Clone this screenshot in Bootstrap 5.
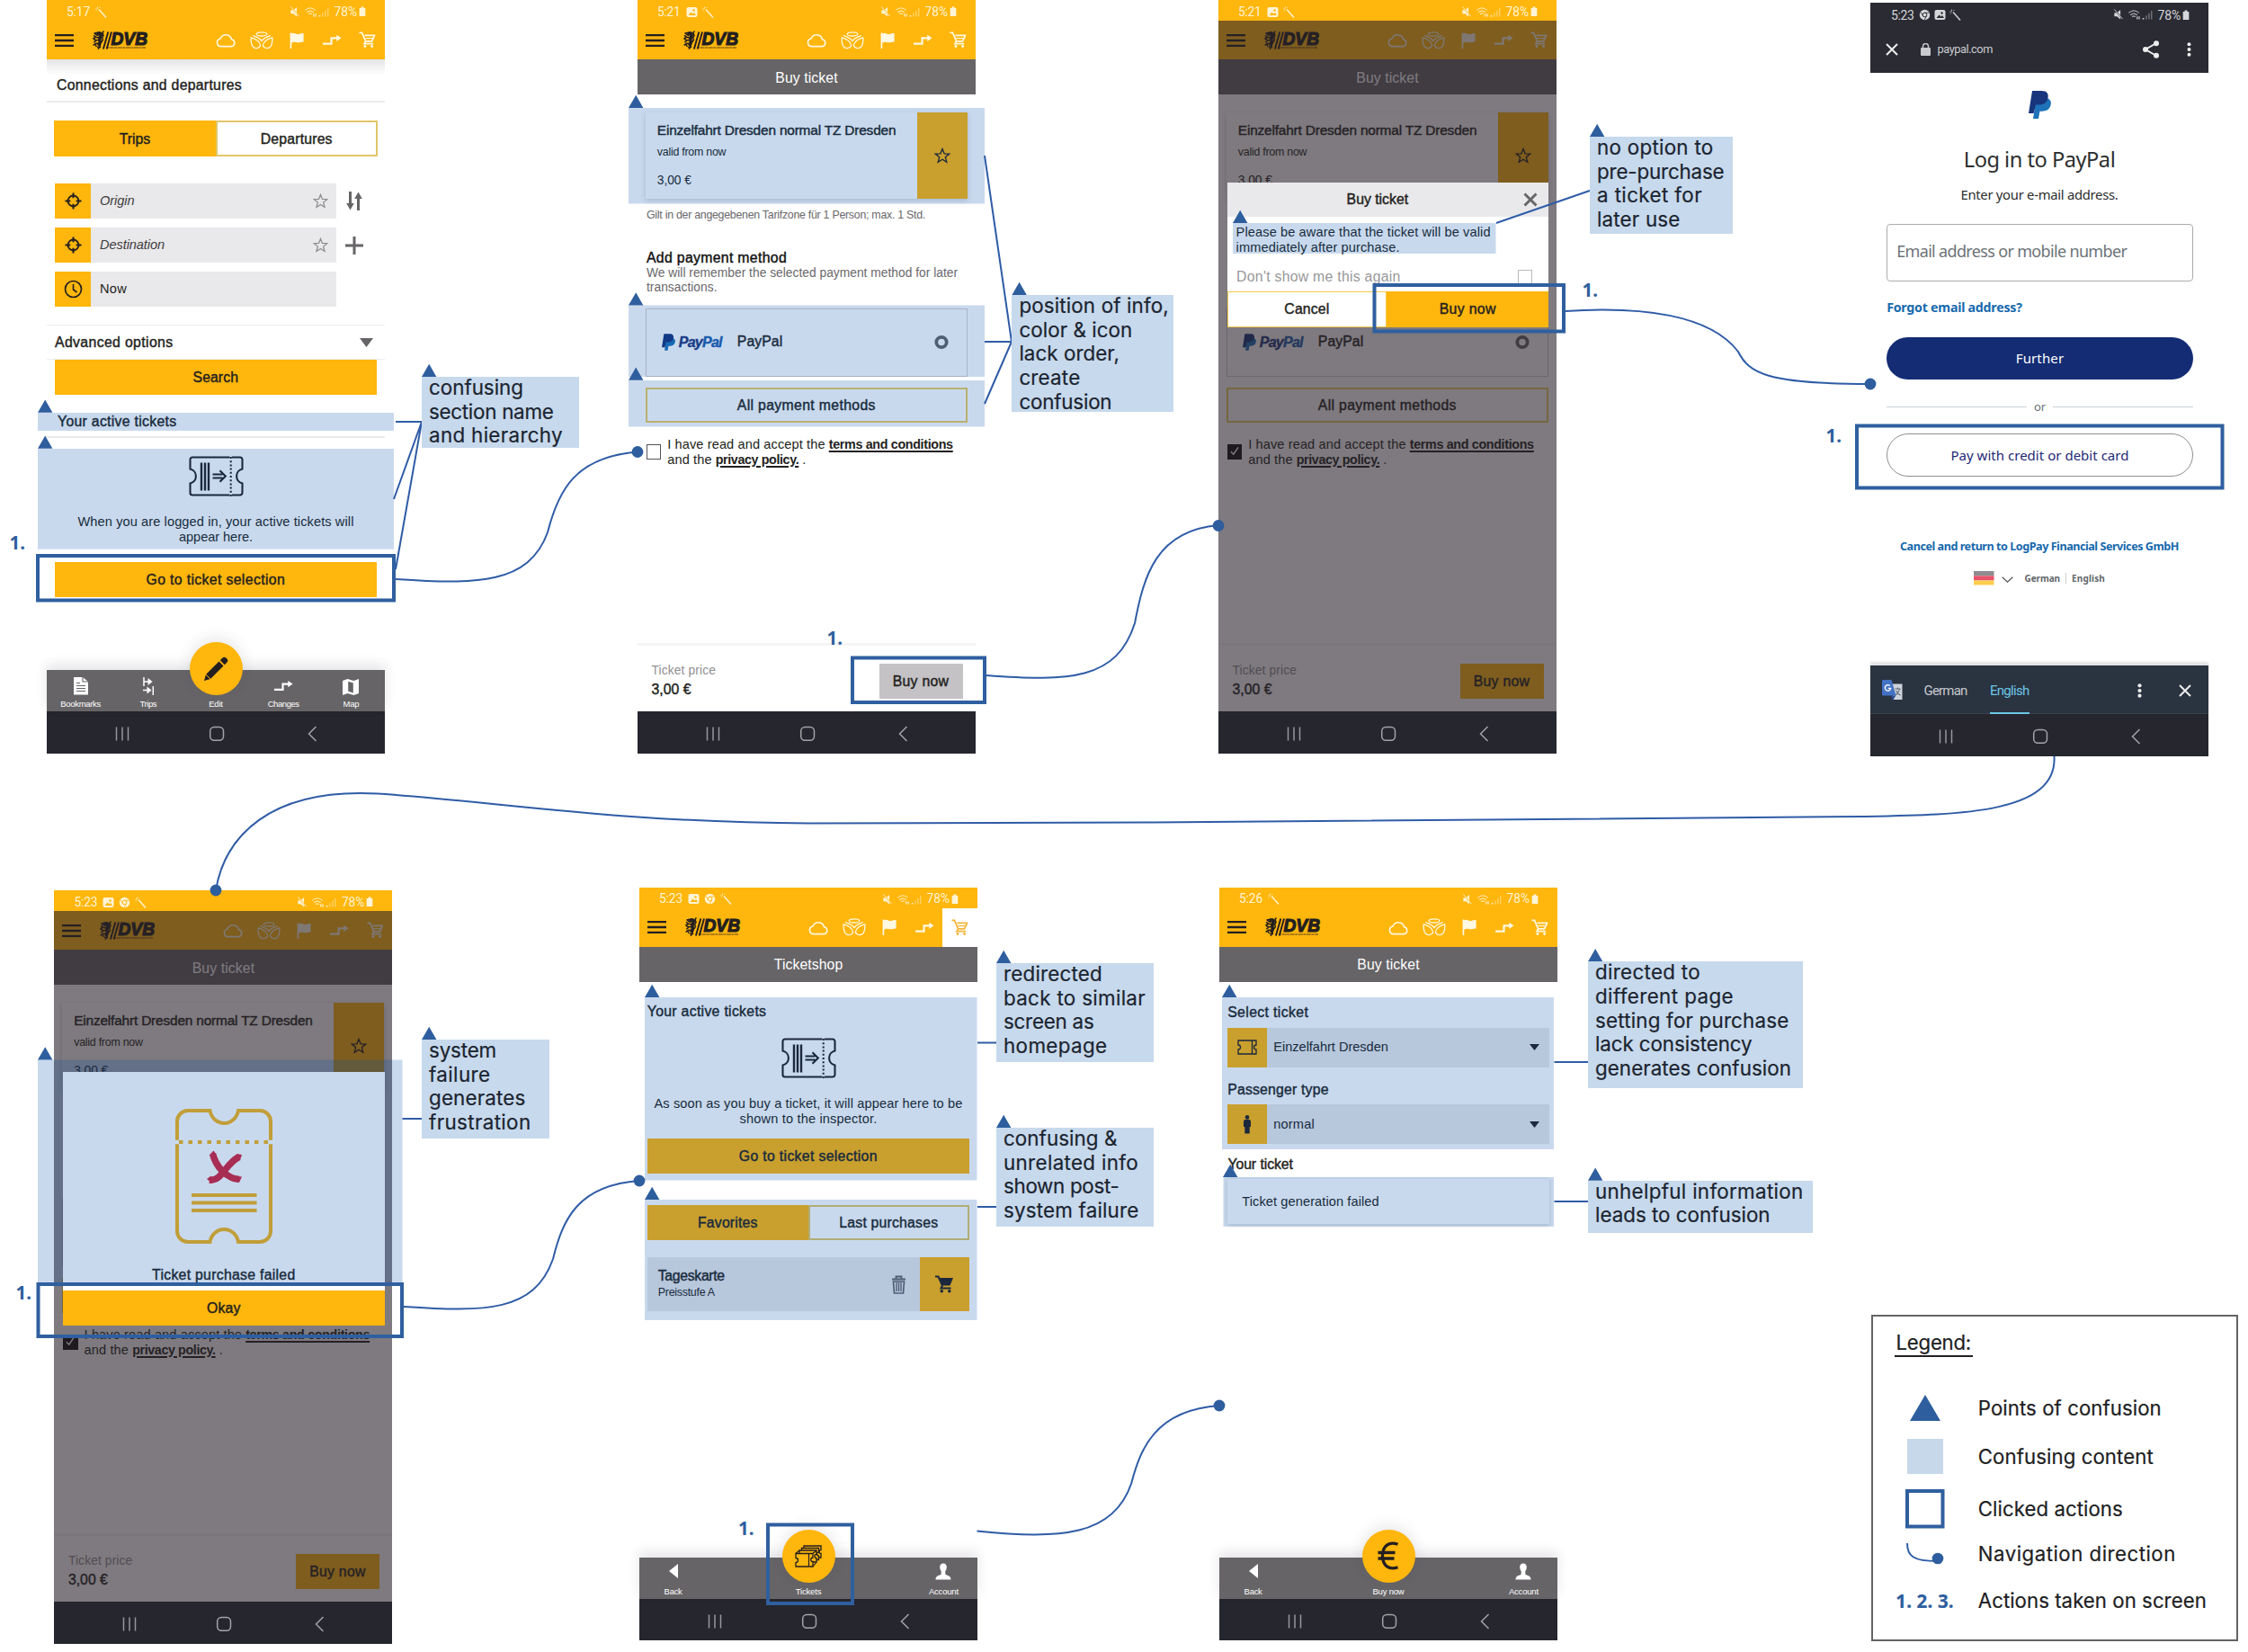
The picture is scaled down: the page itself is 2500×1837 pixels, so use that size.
<!DOCTYPE html>
<html lang="en">
<head>
<meta charset="utf-8">
<title>DVB ticket purchase – user flow</title>
<meta name="viewport" content="width=device-width, initial-scale=1">
<link rel="stylesheet" href="https://cdn.jsdelivr.net/npm/bootstrap@5.3.0/dist/css/bootstrap.min.css">
<style>
:root{--sun:#ffb60d;--ink:#231f20;--asphalt:#666467;--night:#26262e;--blue:#2e5e9e;--tint:#c7d9ec;--field:#e9e8ea}
body{background:#fff;color:var(--ink);font-family:"Liberation Sans",Arial,sans-serif;overflow:hidden}
.board{position:relative;width:2500px;height:1837px;overflow:hidden}
.phone{position:absolute;width:376px;height:837.7px;background:#fff;display:flex;flex-direction:column}
#p1{left:52px;top:0}#p2{left:709px;top:0}#p3{left:1355px;top:0}#p4{left:2080px;top:2.7px;height:838px}
#p5{left:60.4px;top:990px}#p6{left:711px;top:986.8px}#p7{left:1356px;top:986.8px}
.fit{display:inline-block;white-space:nowrap}
.md{-webkit-text-stroke:.42px currentColor}
.t15{font-size:15.8px;line-height:20px}.t14{font-size:14.6px;line-height:17.2px}
.t13{font-size:13.8px;line-height:16.2px}.t12{font-size:12.4px;line-height:16px}
.dimtext{color:#6a686b}
.sun{background:var(--sun)}
svg{display:block;flex:none}
/* status bar and app bar */
.statusbar{height:23px;background:var(--sun);color:#fff4d6;font:13.8px/23px Roboto,sans-serif;padding:3px 21px 0 22px;flex:none}
.statusbar .icons{gap:5px;margin-left:6px}
.appbar{height:43px;background:var(--sun);flex:none}
.appbar .cell{width:39.4px;height:43px;color:#fff8e2}
.appbar .cell:last-child{width:38.8px}
.burger{margin-left:9px}.brandmark{margin-left:21px}
.cart-on .appbar .cell:last-child{background:#fff;color:#f4b63a}
.pagebar{height:39px;background:var(--asphalt);color:#fff;flex:none;padding-top:2px}
.droid{height:46.5px;background:var(--night);flex:none}
/* shared pieces */
.btn-sun{height:39.3px;background:var(--sun);flex:none;padding-top:1px}
.wide{width:358px;margin-left:8.8px}
.seg{height:40px}
.seg .off{border:2px solid #e0c768}
.seg>div{padding-top:1px}
.tabs5{height:46px;background:var(--asphalt);color:#fff;font-size:9.5px;line-height:12px;position:relative;flex:none;box-shadow:0 -6px 12px rgba(60,50,70,.13)}
.tabs5 .slot{width:20%;padding-bottom:2px}
.fab{position:absolute;left:158.5px;top:-31px;width:59px;height:59px;border-radius:50%;background:var(--sun);box-shadow:0 -4px 16px rgba(60,50,70,.12)}
/* home */
.home-head{height:48px;padding:19.4px 0 0 11px;border-bottom:2px solid #ececed;background:linear-gradient(#e4e3e6,#fff 17px);flex:none}
.home-seg{margin-top:20px;width:359.6px;margin-left:8px}
.pick{height:39px;margin-left:9px;gap:0}
.pick .ic{width:40px;height:39px}
.pick .fld{width:273px;height:39px;background:var(--field);padding:0 9px 0 10px}
.pick em{color:#3f3d40}
.pick .side{width:40px}
.picks{margin-top:30px;gap:10px}
.adv{margin-top:20px;height:39px;border-top:1px solid #eee;border-bottom:1px solid #eee;padding:1px 13px 0 9px}
.home-tix{margin-top:20px;padding-left:12px;height:27.6px;border-bottom:2px solid #e9eaec}
.home-icon{margin-top:20px}.home-msg{margin-top:20px}
.home-go{margin-top:18.7px}
/* purchase form */
.tix{margin-top:19.5px;height:96px;box-shadow:0 2px 6px rgba(40,40,60,.2)}
.tix .txt{padding:10.5px 0 0 13px}.tix .t15{font-size:15.4px}.tix .valid{margin-top:6px}.tix .cost{margin-top:16px}
.tix .fav{width:56px}
.gilt{margin:10.2px 0 0 10px}.addpay{margin:30.7px 0 0 10px;color:#111}
.remember{margin:-1.2px 0 0 10px}
.pp{margin-top:14px;height:76px;border:1px solid #d2cfd0;padding:0 20px 0 17px}
.pp .word{font-size:16px;font-weight:700;font-style:italic;color:#1f5fae;-webkit-text-stroke:.4px currentColor}
.pp .word b{color:#233a7d}
.allpay{margin-top:12px;height:39px;border:2px solid #eccd62;padding-top:1px}
.terms{margin:16.2px 0 0 9.7px}
.tick{width:16.5px;height:16.5px;border:1.5px solid #555;margin-top:8.3px;margin-right:7px}
.checked .tick{background:#111;border-color:#111}
.tick svg{visibility:hidden}.checked .tick svg{visibility:visible}
.terms b{font-size:14.3px;text-decoration:underline;text-decoration-thickness:1.5px;text-underline-offset:2px}
.payfoot{height:76px;border-top:3px solid #f5f5f6;padding:19.6px 14.5px 0 15.5px;flex:none}
.payfoot .cta{width:93px;height:39px;background:#c4c2c5;margin-top:.4px}
.checked .payfoot .cta{background:var(--sun)}
.dim{position:absolute;left:0;right:0;top:23px;bottom:46.5px;background:rgba(40,34,42,.6)}
.dlg{position:absolute;left:9.6px;width:357.6px;background:#fff}
#d3{top:202.5px;height:161px}#d5{top:202px;height:282px}
.dlg-head{height:38.5px;background:#e9e9eb;padding:0 12px 0 133px}
.dlg-note{padding:8.5px 0 0 10px}
.dlg-again{padding:14.2px 18.500px 0 10.5px;color:#989799}
.dlg-again .bx{width:16px;height:16px;border:1.5px solid #bbb;margin-top:1.5px}
.dlg-act{height:40px}.dlg-act .no{width:177.5px;border:1.5px solid #f6c84c}
.fail-art{margin-top:41px}.fail-msg{margin-top:25.4px}.fail-ok{height:39.5px;padding-top:1px}
/* shop */
.shop-tix{margin:23.4px 0 0 8.8px}.shop-icon{margin-top:18.4px}.shop-msg{margin-top:20px}
.shop-go{margin-top:13.2px}.shop-seg{margin-top:34.3px;height:39px}
.favrow{margin-top:19.7px;height:60px;background:var(--field)}
.favrow .buy{width:55px}.favrow .info{padding:11px 0 0 12px}
/* select */
.sel-lab{margin:24.500px 0 0 9.2px}.sel-lab2{margin:15px 0 0 9.2px}.sel-lab3{margin:13px 0 0 9.4px}
.sel{height:44px;margin-top:6.6px;background:var(--field);padding-right:11px}
.sel .ic{width:44px;height:44px;margin-right:7.5px}
.gen{margin-top:6px;height:50px;box-shadow:0 1px 5px rgba(40,40,60,.22);padding-left:16.5px}
/* PayPal */
#p4{font-family:"Noto Sans","Open Sans",sans-serif}
.ppstat{background:#2a2b33;color:#d6d7da;font:14px/20px Roboto,sans-serif;height:28px;padding:0 21px 0 23px;flex:none}
.ppbar{background:#2a2b33;color:#c9cacd;height:50.3px;font:12.8px/20px Roboto,sans-serif;padding:0 19px 2px 16.5px;flex:none}
.pp-logo{margin-top:20px}
.pp-h{font-size:23.6px;line-height:30px;margin-top:30.3px;color:#2c2e2f}
.pp-sub{font-size:14.8px;line-height:20px;margin-top:13.4px;color:#2c2e2f}
.ppw{width:340.6px;margin-left:18.2px}
.pp-in{height:64px;flex:none;margin-top:23.6px;border:1.2px solid #a9abad;border-radius:4px;padding:0 0 4px 10px;font-size:18px;color:#6c7378}
.pp-forgot{margin-top:19px;font-size:14.2px;line-height:20px;font-weight:700;color:#1769ad}
.pp-btn{margin-top:22.6px;height:47.2px;border-radius:24px;background:#142c74;color:#fff;font-size:15px;flex:none}
.pp-or{height:20px;margin-top:20.8px;font-size:13px;color:#6c7378;gap:8px}
.pp-or i{flex:1;height:1px;background:#cbd2d6}
.pp-card{margin-top:19.2px;height:48px;border-radius:24px;border:1.2px solid #8d8f94;color:#1f2a75;font-size:15px;flex:none}
.pp-cancel{margin-top:68.4px;font-size:12.6px;line-height:20px;font-weight:700;color:#1769ad}
.pp-lang{margin-top:14.8px;height:20px;font-size:10px;line-height:20px;font-weight:700;color:#62676b}
.trbar{height:54.6px;flex:none;background:#2a3340;color:#c6cace;font:15px/20px Roboto,sans-serif;padding:3px 19px 0 13px;border-bottom:1px solid #3a4350;box-shadow:0 -4px 2px #e3e4e6}
.trbar .on{color:#6cc5e6;box-shadow:0 3px 0 #6cc5e6;height:48px;margin-left:25.500px}
/* annotation layer */
.wires{position:absolute;left:0;top:0}
.hl{fill:#004cab;fill-opacity:.21}
.box{fill:none;stroke:#2f5f9f;stroke-width:4}
.wire{fill:none;stroke:#2f5ca6;stroke-width:2}
.dot,.tri{fill:var(--blue)}
.num{font:700 20.5px "Noto Sans",sans-serif;fill:var(--blue)}
.memo{position:absolute;background:var(--tint);color:#1b2430;font:22.4px/26.65px Inter,"Noto Sans",sans-serif;padding-left:8px;-webkit-text-stroke:.2px currentColor}
.memo .in{margin-top:-1px}
.memo .fit,.legend .fit{display:block;width:max-content}
#m1{left:469px;top:419px;width:174.5px;height:79px}
#m2{left:1125.4px;top:328px;width:180px;height:130px}
#m3{left:1768px;top:152px;width:158.5px;height:108px}
#m5{left:469px;top:1156px;width:141.5px;height:110px}
#m6{left:1108px;top:1071px;width:175px;height:110px}
#m6b{left:1108px;top:1254px;width:175px;height:110px}
#m7{left:1766px;top:1069.3px;width:239px;height:141px}
#m7b{left:1766px;top:1312.7px;width:249.5px;height:58px}
.legend{position:absolute;left:2081px;top:1462px;width:407.5px;height:363px;border:2px solid #646466;background:#fff;font:22.2px/28px Inter,"Noto Sans",sans-serif;color:#202022;-webkit-text-stroke:.2px currentColor}
.legend .cap{margin:15px 0 0 23.500px;padding:0 2px;height:29.5px;border-bottom:2px solid #202022;width:max-content;line-height:27px}
.legend .key{width:77px;margin-left:19px;margin-right:20.8px}
.r1{height:51px;margin-top:31.5px}.r2{height:57.5px}.r3{height:58px}.r4{height:42px}.r5{height:63px}
</style>
</head>
<body>

<!-- symbols -->
<svg width="0" height="0" class="position-absolute" aria-hidden="true">
<defs>
<symbol id="i-burger" viewBox="0 0 21 16"><path d="M0 2.200h21M0 8h21M0 13.800h21" stroke="#231f20" stroke-width="2.300"/></symbol>
<symbol id="i-dvb" viewBox="0 0 62 22">
<g fill="none" stroke="#231f20" stroke-linecap="round" stroke-linejoin="round"><path d="M6 3.200c2-1 3.800 0 3 2.300S7.500 9 8 11s.8 3-.8 4.500" stroke-width="3.600"/><path d="M5.500 2.200L2 3l1.800 1.500L6 5.500M7 8L3.500 7.200 1.500 5.700M2.800 7.800L.9 8.700M7.500 10.500L4 10.800 1.500 9.800M3.500 11.500l-1.700 1.300M7.500 14.500L4 14.200 1.200 16M3 15.500l1 1.800M8 15l.3 3-2 2.200M8.500 18.500l-3-.2M10.300 12.500l1.200-2.500-1-2 1.500-2.500-1-3 1-1.500" stroke-width="1.500"/></g>
<path d="M17.300 1.500L11.900 20.500M21 1.500L15.700 20.500" stroke="#231f20" stroke-width="1.900"/>
<text x="20.500" y="16" textLength="40.500" lengthAdjust="spacingAndGlyphs" font-family="Liberation Sans" font-weight="700" font-style="italic" font-size="20" fill="#231f20" stroke="#231f20" stroke-width="1.200">DVB</text>
<path d="M15 19h44" stroke="#231f20" stroke-opacity=".75" stroke-width="1" stroke-dasharray="3 .6 5 .5"/></symbol>
<symbol id="i-cloud" viewBox="0 0 24 18"><path d="M6 16.200a4.600 4.600 0 0 1-.8-9.100A6.900 6.900 0 0 1 18.300 8a4.200 4.200 0 0 1 .2 8.200z" fill="none" stroke="currentColor" stroke-width="1.700"/></symbol>
<symbol id="i-leaf" viewBox="0 0 26 20"><g fill="none" stroke="currentColor" stroke-width="1.300"><ellipse cx="13" cy="2.900" rx="5.800" ry="2.100"/><path d="M1.200 6.800C6.500 8 11 11.500 11.700 15.500c-1.700 3.800-6.700 4-8.700 1.200S1 10.500 1.200 6.800zM24.800 6.800C19.500 8 15 11.500 14.300 15.500c1.700 3.800 6.700 4 8.700 1.200s2-6.200 1.800-9.900zM3 4.500c2.500 1 7.500 2.500 10 6 2.500-3.500 7.500-5 10-6"/></g></symbol>
<symbol id="i-flag" viewBox="0 0 18 21"><path d="M1.500 1.500V20" stroke="currentColor" stroke-width="1.800"/><path d="M2 2.500c4-2.500 6 1.500 9 .5 2-.7 3-1 5.500-1v10c-3-.3-5 1.500-7.500.8-2.500-.7-4-1-7 .7z" fill="currentColor"/></symbol>
<symbol id="i-change" viewBox="0 0 24 14"><path d="M1 11h10V4.500h8" fill="none" stroke="currentColor" stroke-width="2.300"/><path d="M17 .8l5.500 3.700L17 8.200z" fill="currentColor"/></symbol>
<symbol id="i-cart" viewBox="0 0 20 20"><path d="M.5 1.500h3.300l4.400 10.300h7.500L19 4.600H7M8.200 11.800l-1.700 3h11" fill="none" stroke="currentColor" stroke-width="1.900"/><path d="M8 8.200h9" stroke="currentColor" stroke-width="1.200"/><circle cx="7.500" cy="17.800" r="1.600" fill="currentColor"/><circle cx="15.800" cy="17.800" r="1.600" fill="currentColor"/></symbol>
<symbol id="i-cartfull" viewBox="0 0 20 20"><path d="M0 1.500h3.500L8 11.500l-1.500 3h11" fill="none" stroke="currentColor" stroke-width="2"/><path d="M4.500 3H20l-3.500 8.500h-8z" fill="currentColor"/><circle cx="7.300" cy="17.800" r="1.800" fill="currentColor"/><circle cx="15.800" cy="17.800" r="1.800" fill="currentColor"/></symbol>
<symbol id="i-star" viewBox="0 0 18 18"><path d="M9 1.500l2.100 5.300 5.600.3-4.400 3.600 1.500 5.600L9 13.200l-4.800 3.100 1.500-5.600L1.300 7.100l5.600-.3z" fill="none" stroke="currentColor" stroke-width="1.300"/></symbol>
<symbol id="i-aim" viewBox="0 0 20 20"><circle cx="10" cy="10" r="6.300" fill="none" stroke="#231f20" stroke-width="1.900"/><path d="M10 .5v6.200M10 13.300v6.200M.5 10h6.200M13.300 10h6.200" stroke="#231f20" stroke-width="2.100"/></symbol>
<symbol id="i-pic" viewBox="0 0 13 13"><rect x=".5" y="1" width="12" height="11" rx="2" fill="currentColor"/><path d="M2.500 10l3-3.500 2 2 1.500-1.500 2 3z" fill="var(--bg,#ffb60d)"/><circle cx="8.500" cy="4.500" r="1.200" fill="var(--bg,#ffb60d)"/></symbol>
<symbol id="i-chrome" viewBox="0 0 13 13"><circle cx="6.500" cy="6.500" r="5.700" fill="currentColor"/><circle cx="6.500" cy="6.500" r="2.300" fill="none" stroke="var(--bg,#ffb60d)" stroke-width="1"/><path d="M6.500 4.200h5M4.500 7.700L2 3.500M8.500 7.700L6.300 12" stroke="var(--bg,#ffb60d)" stroke-width=".8"/></symbol>
<symbol id="i-wand" viewBox="0 0 13 13"><path d="M4 3.500l8 9" stroke="currentColor" stroke-width="1.400"/><path d="M2.500.5v2M.3 3h2M1 5.500l1-1M5.500 1l-1 1" stroke="currentColor" stroke-width=".8"/></symbol>
<symbol id="i-sys" viewBox="0 0 47 13"><path d="M1 4.500h3L8 1v11L4 8.500H1z" fill="currentColor"/><path d="M1.500 1l9.500 11" stroke="var(--bg,#ffb60d)" stroke-width="1.600"/><path d="M1 .5l9.500 11" stroke="currentColor" stroke-width="1"/><g fill="none" stroke="currentColor" opacity=".75" stroke-width="1.200"><path d="M17.500 4.500q6-5 12 0M19.500 7q4-3.500 8 0M21.500 9.300q2-2 4 0"/></g><path d="M27.500 12V8.500M29.800 8.500V12" stroke="currentColor" stroke-width="1.200"/><path d="M34.500 12v-1.500" stroke="currentColor" stroke-width="1.800"/><path d="M38 12V7.500M41 12V5M44 12V2" stroke="currentColor" opacity=".4" stroke-width="1.600"/></symbol>
<symbol id="i-batt" viewBox="0 0 8 12"><path d="M2.500.5h3v1.500H7.500v9.500h-7V2h2z" fill="currentColor"/></symbol>
<symbol id="i-ticket" viewBox="0 0 61 45"><path d="M4 1.500h53a2.500 2.500 0 0 1 2.500 2.500v10.500a8.200 8.200 0 0 0 0 16V41a2.500 2.500 0 0 1-2.500 2.500H4A2.500 2.500 0 0 1 1.500 41V30.500a8.200 8.200 0 0 0 0-16V4A2.500 2.500 0 0 1 4 1.500z" fill="none" stroke="currentColor" stroke-width="2.100"/><path d="M14 7.500v31M18 7.500v31M22 7.500v31" stroke="currentColor" stroke-width="2.400"/><path d="M26.500 20.500h11M26.500 24.500h11M34.500 16.300l6.300 6.200-6.300 6.200" fill="none" stroke="currentColor" stroke-width="2.100"/><path d="M46.700 0v45" stroke="#fff" stroke-width="2.400"/><path d="M46.700 1v44" stroke="currentColor" stroke-width="2.100" stroke-dasharray="2 2.200"/></symbol>
<symbol id="i-pp" viewBox="0 0 25 31"><path d="M8.500 8h12c4 1.500 5 4.500 4 8-1.200 4.800-4.800 6.700-9.500 6.700h-2.600L11 31H5z" fill="#1e72b8"/><path d="M4 0h10.500c6 0 8 3.500 7 8-1.200 5.500-4.800 7.500-10 7.500H8L5.600 25H0z" fill="#16357c"/></symbol>
<symbol id="i-droid" viewBox="0 0 376 46.500"><path d="M77.500 17.500v15M84 17.500v15M90.500 17.500v15" stroke="#97979c" stroke-width="1.500"/><rect x="181.700" y="17.500" width="14.800" height="14.800" rx="4.500" fill="none" stroke="#a3a3a8" stroke-width="1.500"/><path d="M299.500 17l-8 8 8 8" fill="none" stroke="#a3a3a8" stroke-width="1.500"/></symbol>
<symbol id="i-person" viewBox="0 0 18 19"><path d="M9 .5c2.500 0 4 1.800 3.800 4.500-.2 2-.8 3-1.600 4.500l.3 3.500c2.500 1 6 1.200 6 5.500H.5c0-4.300 3.500-4.500 6-5.500l.3-3.500C6 8 5.400 7 5.200 5 5 2.300 6.500.5 9 .5z" fill="#fff"/></symbol>
</defs>
</svg>

<!-- repeated parts -->
<template id="t-sys"><div class="d-flex align-items-center ms-auto"><svg width="46" height="12.500"><use href="#i-sys"/></svg><span class="fit ms-1" data-w="25.500">78%</span><svg width="8" height="11.500" style="margin-left:2px"><use href="#i-batt"/></svg></div></template>
<template id="t-bar"><div class="appbar d-flex align-items-center">
<svg class="burger" width="21" height="16"><use href="#i-burger"/></svg><svg class="brandmark" width="62" height="22"><use href="#i-dvb"/></svg>
<div class="d-flex ms-auto">
<div class="cell d-flex align-items-center justify-content-center"><svg width="23" height="17.500"><use href="#i-cloud"/></svg></div>
<div class="cell d-flex align-items-center justify-content-center"><svg width="26" height="20"><use href="#i-leaf"/></svg></div>
<div class="cell d-flex align-items-center justify-content-center"><svg width="17" height="20"><use href="#i-flag"/></svg></div>
<div class="cell d-flex align-items-center justify-content-center"><svg width="23" height="13.500"><use href="#i-change"/></svg></div>
<div class="cell d-flex align-items-center justify-content-center"><svg width="18.500" height="18.500"><use href="#i-cart"/></svg></div>
</div></div></template>
<template id="t-droid"><div class="droid"><svg width="376" height="46.500"><use href="#i-droid"/></svg></div></template>
<template id="t-buy">
<div class="pagebar d-flex align-items-center justify-content-center"><span class="fit t15" data-w="69.500">Buy ticket</span></div>
<div class="tix wide d-flex justify-content-between"><div class="txt">
<div class="t15"><span class="fit md" data-w="265.500">Einzelfahrt Dresden normal TZ Dresden</span></div>
<div class="t12 valid"><span class="fit" data-w="76.500">valid from now</span></div>
<div class="t13 cost"><span class="fit" data-w="38">3,00 €</span></div></div>
<div class="fav sun d-flex align-items-center justify-content-center"><svg width="18" height="18"><use href="#i-star"/></svg></div></div>
<div class="gilt t12 dimtext"><span class="fit" data-w="310">Gilt in der angegebenen Tarifzone für 1 Person; max. 1 Std.</span></div>
<div class="addpay t15"><span class="fit md" data-w="156">Add payment method</span></div>
<div class="remember t13 dimtext"><span class="fit" data-w="346">We will remember the selected payment method for later</span><br><span class="fit" data-w="78.500">transactions.</span></div>
<div class="pp wide d-flex align-items-center"><svg width="15" height="19"><use href="#i-pp"/></svg><span class="fit word" data-w="48" style="margin-left:4px"><b>Pay</b>Pal</span><span class="fit t15 md" data-w="50.500" style="margin:-2px 0 0 17px">PayPal</span>
<svg class="ms-auto" width="16" height="17"><circle cx="8" cy="8.500" r="5.700" fill="none" stroke="#666467" stroke-width="3.800"/></svg></div>
<div class="allpay wide d-flex align-items-center justify-content-center"><span class="fit t15 md" data-w="154">All payment methods</span></div>
<div class="terms d-flex"><div class="tick"><svg width="13.500" height="13.500" viewBox="0 0 14 14"><path d="M3 7.500l3 3 5.500-8" fill="none" stroke="#fff" stroke-width="1.500"/></svg></div>
<div class="t14"><span class="fit" data-w="175.500">I have read and accept the</span> <b class="fit" data-w="138">terms and conditions</b><br><span class="fit" data-w="49.500">and the</span> <b class="fit" data-w="92.500">privacy policy.</b> .</div></div>
<div class="payfoot d-flex justify-content-between mt-auto"><div><div class="t13" style="color:#918f92"><span class="fit" data-w="71.500">Ticket price</span></div><div class="t15" style="margin-top:3px"><span class="fit md" data-w="44">3,00 €</span></div></div>
<div class="cta d-flex align-items-center justify-content-center"><span class="fit t15 md" data-w="62.500">Buy now</span></div></div>
</template>

<main class="board">

<!-- 1 home -->
<section class="phone" id="p1">
<div class="statusbar d-flex align-items-center"><span class="fit" data-w="26">5:17</span><div class="d-flex icons"><svg width="13" height="13"><use href="#i-wand"/></svg></div><i data-part="t-sys"></i></div>
<i data-part="t-bar"></i>
<div class="home-head t15"><span class="fit md" data-w="206">Connections and departures</span></div>
<div class="seg home-seg d-flex t15 text-center"><div class="sun w-50 d-flex align-items-center justify-content-center"><span class="fit md" data-w="34.500">Trips</span></div><div class="off w-50 d-flex align-items-center justify-content-center"><span class="fit md" data-w="80">Departures</span></div></div>
<div class="picks d-flex flex-column">
<div class="pick d-flex align-items-center"><div class="ic sun d-flex align-items-center justify-content-center"><svg width="19" height="19"><use href="#i-aim"/></svg></div><div class="fld d-flex align-items-center justify-content-between t15"><em class="fit t14" data-w="38.500">Origin</em><svg width="17" height="17" style="color:#8c8a8e"><use href="#i-star"/></svg></div>
<div class="side d-flex justify-content-center"><svg width="20" height="21" viewBox="0 0 20 21"><path d="M5.500 0v14M14.500 21V7" stroke="#666467" stroke-width="3"/><path d="M1.200 13h8.600L5.500 20.500zM10.200 8h8.600L14.500.5z" fill="#666467"/></svg></div></div>
<div class="pick d-flex align-items-center"><div class="ic sun d-flex align-items-center justify-content-center"><svg width="19" height="19"><use href="#i-aim"/></svg></div><div class="fld d-flex align-items-center justify-content-between t15"><em class="fit t14" data-w="72">Destination</em><svg width="17" height="17" style="color:#8c8a8e"><use href="#i-star"/></svg></div>
<div class="side d-flex justify-content-center"><svg width="20" height="20"><path d="M10 0v20M0 10h20" stroke="#666467" stroke-width="3"/></svg></div></div>
<div class="pick d-flex align-items-center"><div class="ic sun d-flex align-items-center justify-content-center"><svg width="21" height="21" viewBox="0 0 21 21"><circle cx="10.500" cy="10.500" r="9" fill="none" stroke="#231f20" stroke-width="1.700"/><path d="M10.500 5v6l4 3" fill="none" stroke="#231f20" stroke-width="1.600"/></svg></div><div class="fld d-flex align-items-center"><span class="fit t14" data-w="30">Now</span></div></div>
</div>
<div class="adv d-flex align-items-center justify-content-between t15"><span class="fit md" data-w="131.500">Advanced options</span><svg width="15" height="10"><path d="M0 0h15L7.500 10z" fill="#666467"/></svg></div>
<div class="btn-sun wide d-flex align-items-center justify-content-center t15"><span class="fit md" data-w="50.500">Search</span></div>
<div class="home-tix t15"><span class="fit md" data-w="132.500">Your active tickets</span></div>
<div class="home-icon d-flex justify-content-center"><svg width="61" height="45"><use href="#i-ticket"/></svg></div>
<div class="home-msg t14 text-center"><span class="fit" data-w="307">When you are logged in, your active tickets will</span><br><span class="fit" data-w="82">appear here.</span></div>
<div class="btn-sun wide home-go d-flex align-items-center justify-content-center t15"><span class="fit md" data-w="154.500">Go to ticket selection</span></div>
<div class="tabs5 mt-auto d-flex text-center">
<div class="slot d-flex flex-column align-items-center justify-content-end"><svg width="16" height="20" viewBox="0 0 16 20"><path d="M0 0h10l6 5v14.500H0z" fill="#fff"/><path d="M10 0v5h6M3 6.500h4M3 9.500h10M3 12.500h10M3 15.500h10" stroke="#666467" stroke-width="1.100" fill="none"/></svg><span class="fit mt-1" data-w="44.500">Bookmarks</span></div>
<div class="slot d-flex flex-column align-items-center justify-content-end"><svg width="12" height="20" viewBox="0 0 12 20"><path d="M1 0v10M11.300 10v10M1 5h7M0 14.500h7" stroke="#fff" stroke-width="1.500"/><path d="M5.500 1l5 4-5 4zM4.500 10.500l5 4-5 4z" fill="#fff"/></svg><span class="fit mt-1" data-w="18.500">Trips</span></div>
<div class="slot d-flex flex-column align-items-center justify-content-end"><span class="fit" data-w="15.500">Edit</span></div>
<div class="slot d-flex flex-column align-items-center justify-content-end"><svg width="23" height="14"><use href="#i-change"/></svg><span class="fit" style="margin-top:7px" data-w="35">Changes</span></div>
<div class="slot d-flex flex-column align-items-center justify-content-end"><svg width="18" height="18" viewBox="0 0 18 18"><path d="M0 2l5.500-2 7 2L18 0v16l-5.500 2-7-2L0 18z" fill="#fff"/><path d="M6.200 2.800l5.600 1.600v11L6.200 13.800z" fill="#666467"/></svg><span class="fit mt-1" data-w="17.500">Map</span></div>
<div class="fab d-flex align-items-center justify-content-center"><svg width="29" height="29" viewBox="0 0 29 29"><path d="M1 28l2-7L17.500 6.500l5 5L8 26z" fill="#231f20"/><path d="M18.800 5.200l2.700-2.700c1.200-1.200 2.800-1 4 .2l.8.8c1.200 1.200 1.400 2.800.2 4L23.800 10.200z" fill="#231f20"/><path d="M3 21L8 26" stroke="#ffb60d" stroke-width="1"/></svg></div>
</div>
<i data-part="t-droid"></i>
</section>

<!-- 2 buy ticket -->
<section class="phone" id="p2">
<div class="statusbar d-flex align-items-center"><span class="fit" data-w="25.500">5:21</span><div class="d-flex icons"><svg width="13" height="13"><use href="#i-pic"/></svg><svg width="13" height="13"><use href="#i-wand"/></svg></div><i data-part="t-sys"></i></div>
<i data-part="t-bar"></i><i data-part="t-buy"></i><i data-part="t-droid"></i>
</section>

<!-- 3 confirmation dialog -->
<section class="phone checked" id="p3">
<div class="statusbar d-flex align-items-center"><span class="fit" data-w="25.500">5:21</span><div class="d-flex icons"><svg width="13" height="13"><use href="#i-pic"/></svg><svg width="13" height="13"><use href="#i-wand"/></svg></div><i data-part="t-sys"></i></div>
<i data-part="t-bar"></i><i data-part="t-buy"></i><i data-part="t-droid"></i>
<div class="dim"></div>
<div class="dlg d-flex flex-column" id="d3">
<div class="dlg-head d-flex align-items-center justify-content-between t15"><span class="fit md" data-w="68.500">Buy ticket</span><svg width="16" height="16"><path d="M1.500 1.500l13 13M14.500 1.500l-13 13" stroke="#666467" stroke-width="2.900"/></svg></div>
<div class="dlg-note t14"><span class="fit" data-w="283">Please be aware that the ticket will be valid</span><br><span class="fit" data-w="182">immediately after purchase.</span></div>
<div class="dlg-again d-flex justify-content-between t15"><span class="fit" data-w="182.500">Don't show me this again</span><div class="bx"></div></div>
<div class="dlg-act d-flex mt-auto t15"><div class="no d-flex align-items-center justify-content-center"><span class="fit md" data-w="50">Cancel</span></div><div class="sun flex-fill d-flex align-items-center justify-content-center"><span class="fit md" data-w="63">Buy now</span></div></div>
</div>
</section>

<!-- 4 PayPal login -->
<section class="phone" id="p4" style="--bg:#2a2b33">
<div class="ppstat d-flex align-items-center"><span class="fit" data-w="25.500">5:23</span><div class="d-flex" style="gap:4px;margin-left:5px"><svg width="13" height="13"><use href="#i-chrome"/></svg><svg width="13" height="13"><use href="#i-pic"/></svg><svg width="13" height="13"><use href="#i-wand"/></svg></div><i data-part="t-sys"></i></div>
<div class="ppbar d-flex align-items-center"><svg width="14" height="14"><path d="M1 1l12 12M13 1L1 13" stroke="#eee" stroke-width="2"/></svg>
<svg width="11" height="14" viewBox="0 0 11 14" style="margin-left:25px"><rect y="5" width="11" height="9" rx="1" fill="#c9cacd"/><path d="M2.500 6V3.500a3 3 0 0 1 6 0V6" fill="none" stroke="#c9cacd" stroke-width="1.500"/></svg><span class="fit" data-w="61.500" style="margin-left:8px">paypal.com</span>
<svg class="ms-auto" width="18" height="20" viewBox="0 0 18 20"><path d="M15 3L3 10l12 7" fill="none" stroke="#eee" stroke-width="2"/><circle cx="15" cy="3.200" r="3" fill="#eee"/><circle cx="3" cy="10" r="3" fill="#eee"/><circle cx="15" cy="16.800" r="3" fill="#eee"/></svg>
<svg width="5" height="16" style="margin-left:31px"><circle cx="2.500" cy="2.300" r="2" fill="#eee"/><circle cx="2.500" cy="8" r="2" fill="#eee"/><circle cx="2.500" cy="13.700" r="2" fill="#eee"/></svg></div>
<div class="pp-logo d-flex justify-content-center"><svg width="25" height="31"><use href="#i-pp"/></svg></div>
<div class="pp-h text-center"><span class="fit" data-w="168.500">Log in to PayPal</span></div>
<div class="pp-sub text-center"><span class="fit" data-w="175">Enter your e-mail address.</span></div>
<div class="pp-in ppw d-flex align-items-center"><span class="fit" data-w="256">Email address or mobile number</span></div>
<div class="pp-forgot ppw"><span class="fit" data-w="150.500">Forgot email address?</span></div>
<div class="pp-btn ppw d-flex align-items-center justify-content-center"><span class="fit" data-w="53.500">Further</span></div>
<div class="pp-or ppw d-flex align-items-center"><i></i><span>or</span><i></i></div>
<div class="pp-card ppw d-flex align-items-center justify-content-center"><span class="fit" data-w="198">Pay with credit or debit card</span></div>
<div class="pp-cancel text-center"><span class="fit" data-w="310">Cancel and return to LogPay Financial Services GmbH</span></div>
<div class="pp-lang d-flex align-items-center" style="padding-left:115px"><svg width="22.500" height="15.500"><path fill="#8e8c8f" d="M0 0h22.500v5.300H0z"/><path fill="#e8536a" d="M0 5.300h22.500v5.200H0z"/><path fill="#fbcf4d" d="M0 10.500h22.500v5H0z"/></svg><svg width="13" height="7" style="margin:2px 12.500px 0 8.500px"><path d="M.7.7l5.800 5.500L12.300.7" fill="none" stroke="#555" stroke-width="1.200"/></svg><span class="fit" data-w="39.500">German</span><span style="width:1px;height:12px;background:#ccc;margin:0 6px"></span><span class="fit" data-w="37">English</span></div>
<div class="trbar mt-auto d-flex align-items-center"><svg width="23" height="23" viewBox="0 0 23 23"><path d="M10 4.500h12.500V22H13z" fill="#cdd3da"/><path d="M14.500 10h6M17.500 8.500V10M19.500 10q-1 5-5 7M15.500 12q2 4 5 5" stroke="#5b6672" stroke-width="1.100" fill="none"/><path d="M1 0h9.500l5 17.500H1.500A1.200 1.200 0 0 1 0 16V1z" fill="#4372c4"/><path d="M10 17.500h5.500L12 22.500z" fill="#2b4f96"/><path d="M8.800 6.600a3.200 3.200 0 1 0 .9 2.800H6.700" fill="none" stroke="#fff" stroke-width="1.400"/></svg>
<span class="fit" data-w="48" style="margin-left:23.500px">German</span><div class="on d-flex align-items-center"><span class="fit" data-w="43.500">English</span></div>
<svg class="ms-auto" width="5" height="16"><circle cx="2.500" cy="2.300" r="2.100" fill="#eee"/><circle cx="2.500" cy="8" r="2.100" fill="#eee"/><circle cx="2.500" cy="13.700" r="2.100" fill="#eee"/></svg><svg width="14" height="14" style="margin-left:41.500px"><path d="M1 1l12 12M13 1L1 13" stroke="#eee" stroke-width="2"/></svg></div>
<i data-part="t-droid"></i>
</section>

<!-- 5 failure dialog -->
<section class="phone checked" id="p5">
<div class="statusbar d-flex align-items-center"><span class="fit" data-w="26">5:23</span><div class="d-flex icons"><svg width="13" height="13"><use href="#i-pic"/></svg><svg width="13" height="13"><use href="#i-chrome"/></svg><svg width="13" height="13"><use href="#i-wand"/></svg></div><i data-part="t-sys"></i></div>
<i data-part="t-bar"></i><i data-part="t-buy"></i><i data-part="t-droid"></i>
<div class="dim"></div>
<div class="dlg d-flex flex-column align-items-center" id="d5">
<svg class="fail-art" width="108" height="150" viewBox="0 0 108 150"><path d="M14 2H38.500a16 17 0 0 0 31.500 0H94a12 12 0 0 1 12 12V136a12 12 0 0 1-12 12H70a16 17 0 0 0-31.500 0H14A12 12 0 0 1 2 136V14A12 12 0 0 1 14 2z" fill="none" stroke="#f5b51b" stroke-width="4"/><path d="M0 37h108" stroke="#fff" stroke-width="4.500"/><path d="M4 37h100" stroke="#f5b51b" stroke-width="4" stroke-dasharray="4.500 6"/><path d="M41.500 50C45 63 55 77 71 78.500M71 53.500C56 60 52 81 38 79" fill="none" stroke="#d5263d" stroke-width="7.500"/><path d="M38 51l4.500-4.500L45 50zM68 50l6 1-2 6zM35 78l4-3 1 7zM68 75l6 .5-3 6.500z" fill="#d5263d"/><path d="M18 96h72.500M18 104.500h72.500M18 113h72.500" stroke="#f5b51b" stroke-width="4"/></svg>
<div class="fail-msg t15"><span class="fit md" data-w="159.500">Ticket purchase failed</span></div>
<div class="fail-ok sun w-100 mt-auto d-flex align-items-center justify-content-center t15"><span class="fit md" data-w="37.500">Okay</span></div>
</div>
</section>

<!-- 6 ticket shop -->
<section class="phone cart-on" id="p6">
<div class="statusbar d-flex align-items-center"><span class="fit" data-w="26">5:23</span><div class="d-flex icons"><svg width="13" height="13"><use href="#i-pic"/></svg><svg width="13" height="13"><use href="#i-chrome"/></svg><svg width="13" height="13"><use href="#i-wand"/></svg></div><i data-part="t-sys"></i></div>
<i data-part="t-bar"></i>
<div class="pagebar d-flex align-items-center justify-content-center"><span class="fit t15" data-w="76.500">Ticketshop</span></div>
<div class="shop-tix t15"><span class="fit md" data-w="132.500">Your active tickets</span></div>
<div class="shop-icon d-flex justify-content-center"><svg width="61" height="45"><use href="#i-ticket"/></svg></div>
<div class="shop-msg t14 text-center"><span class="fit" data-w="343">As soon as you buy a ticket, it will appear here to be</span><br><span class="fit" data-w="153">shown to the inspector.</span></div>
<div class="btn-sun wide shop-go d-flex align-items-center justify-content-center t15"><span class="fit md" data-w="154">Go to ticket selection</span></div>
<div class="seg wide shop-seg d-flex t15"><div class="sun w-50 d-flex align-items-center justify-content-center"><span class="fit md" data-w="66.500">Favorites</span></div><div class="off w-50 d-flex align-items-center justify-content-center"><span class="fit md" data-w="110">Last purchases</span></div></div>
<div class="favrow wide d-flex align-items-stretch"><div class="info"><div class="t15"><span class="fit md" data-w="74">Tageskarte</span></div><div class="t12"><span class="fit" data-w="63">Preisstufe A</span></div></div>
<svg class="ms-auto align-self-center" width="15" height="21" viewBox="0 0 15 21" style="margin-right:16px"><path d="M0 4.500h15M4.500 4V1.500h6V4" stroke="#666467" stroke-width="1.800" fill="none"/><path d="M1.500 7h12l-1 13h-10z" fill="none" stroke="#666467" stroke-width="1.700"/><path d="M5 8v10M7.500 8v10M10 8v10" stroke="#666467" stroke-width="1.400"/></svg>
<div class="buy sun d-flex align-items-center justify-content-center"><svg width="20" height="20"><use href="#i-cartfull"/></svg></div></div>
<div class="tabs5 mt-auto d-flex justify-content-between text-center">
<div class="slot d-flex flex-column align-items-center justify-content-end"><svg width="10" height="16"><path d="M10 0v16L0 8z" fill="#fff"/></svg><span class="fit" style="margin-top:9px" data-w="20">Back</span></div>
<div class="slot d-flex flex-column align-items-center justify-content-end"><span class="fit" data-w="28.500">Tickets</span></div>
<div class="slot d-flex flex-column align-items-center justify-content-end"><svg width="18" height="19"><use href="#i-person"/></svg><span class="fit" style="margin-top:7px" data-w="33">Account</span></div>
<div class="fab d-flex align-items-center justify-content-center"><svg width="30" height="25" viewBox="0 0 30 25"><g fill="#ffb60d" stroke="#231f20" stroke-width="1.300"><path d="M10 1h19v4.500a2 2 0 0 0 0 4V14H10z"/><path d="M7.500 3.500h19V8a2 2 0 0 0 0 4v4.500h-19z"/><path d="M5 6h19v4.500a2 2 0 0 0 0 4V19H5z"/><path d="M1 9.500h19V14a2 2 0 0 0 0 4.500V24H1v-4.500a2.500 2.500 0 0 0 0-5z"/></g><path d="M15.500 10v13.500M1 9.500L5 6M20 9.500L24 6M20 24l4-5" stroke="#231f20" stroke-width="1.200"/></svg></div>
</div>
<i data-part="t-droid"></i>
</section>

<!-- 7 select ticket -->
<section class="phone" id="p7">
<div class="statusbar d-flex align-items-center"><span class="fit" data-w="26">5:26</span><div class="d-flex icons"><svg width="13" height="13"><use href="#i-wand"/></svg></div><i data-part="t-sys"></i></div>
<i data-part="t-bar"></i>
<div class="pagebar d-flex align-items-center justify-content-center"><span class="fit t15" data-w="69.500">Buy ticket</span></div>
<div class="sel-lab t15"><span class="fit md" data-w="90">Select ticket</span></div>
<div class="sel wide d-flex align-items-center t15"><div class="ic sun d-flex align-items-center justify-content-center"><svg width="22" height="17" viewBox="0 0 22 17"><path d="M1 1h20v5a2.500 2.500 0 0 0 0 5v5H1v-5a2.500 2.500 0 0 0 0-5zM16.500 1v15" fill="none" stroke="#231f20" stroke-width="1.300"/></svg></div><span class="fit t14" data-w="127.500">Einzelfahrt Dresden</span><svg class="ms-auto" width="11" height="7"><path d="M0 0h11L5.500 7z" fill="#231f20"/></svg></div>
<div class="sel-lab2 t15"><span class="fit md" data-w="112.500">Passenger type</span></div>
<div class="sel wide d-flex align-items-center t15"><div class="ic sun d-flex align-items-center justify-content-center"><svg width="10" height="21" viewBox="0 0 10 21"><circle cx="5" cy="2.400" r="2.300" fill="#231f20"/><path d="M1 7q0-2 2-2h4q2 0 2 2v6H7.700v7.500H2.300V13H1z" fill="#231f20"/></svg></div><span class="fit t14" data-w="45.500">normal</span><svg class="ms-auto" width="11" height="7"><path d="M0 0h11L5.500 7z" fill="#231f20"/></svg></div>
<div class="sel-lab3 t15"><span class="fit md" data-w="72.500">Your ticket</span></div>
<div class="gen wide d-flex align-items-center"><span class="fit t14" data-w="152.500">Ticket generation failed</span></div>
<div class="tabs5 mt-auto d-flex justify-content-between text-center">
<div class="slot d-flex flex-column align-items-center justify-content-end"><svg width="10" height="16"><path d="M10 0v16L0 8z" fill="#fff"/></svg><span class="fit" style="margin-top:9px" data-w="20">Back</span></div>
<div class="slot d-flex flex-column align-items-center justify-content-end"><span class="fit" data-w="35">Buy now</span></div>
<div class="slot d-flex flex-column align-items-center justify-content-end"><svg width="18" height="19"><use href="#i-person"/></svg><span class="fit" style="margin-top:7px" data-w="33">Account</span></div>
<div class="fab d-flex align-items-center justify-content-center"><svg width="24" height="32" viewBox="0 0 24 32"><path d="M22.500 3.300C13 -.5 5.500 5 5.500 16s7.500 16.500 17 12.700M.5 12.500H19.500M.5 19H18.500" fill="none" stroke="#231f20" stroke-width="3.300"/></svg></div>
</div>
<i data-part="t-droid"></i>
</section>

<!-- annotations -->
<svg class="wires" width="2500" height="1837" viewBox="0 0 2500 1837">
<g class="hl">
<rect x="42" y="459" width="396" height="20"/><rect x="42" y="499" width="396" height="111.700"/>
<rect x="699" y="120" width="396" height="106.500"/><rect x="699" y="339.500" width="396" height="79.500"/><rect x="699" y="423" width="396" height="51.500"/>
<rect x="1371" y="248" width="292.500" height="34"/>
<rect x="42" y="1178.500" width="405.500" height="249"/>
<rect x="717" y="1109" width="369.500" height="203.500"/><rect x="717" y="1334" width="369.500" height="134"/>
<rect x="1359" y="1109" width="369" height="169"/><rect x="1360.500" y="1309" width="367.500" height="55"/>
</g>
<g class="box">
<rect x="42" y="618" width="396" height="49.500"/><rect x="948" y="731.500" width="147" height="49.500"/><rect x="1528.500" y="317" width="210.500" height="51.500"/>
<rect x="2065" y="473.500" width="406.500" height="69"/><rect x="42.500" y="1428" width="404.500" height="58"/><rect x="854" y="1695.500" width="94" height="87.500"/>
</g>
<g class="wire">
<path d="M440 469h29M438 555l31-86M440 633l29-164M1095 173l30 207M1095 380h30M1095 449l30-69M1664 248l104-36M447.500 1244h21.500M1087 1159.500h21M1087 1342h21M1728.500 1181H1766M1728.500 1336H1766"/>
<path d="M440 644C530 650 588 650 609 592C621 545 640 508 709 502.500"/>
<path d="M1097 751C1190 758 1242 756 1262 693C1272 640 1286 590 1355 584"/>
<path d="M1741 346C1825 340 1902 350 1933 391C1945 415 1965 427 2080 427"/>
<path d="M2284.500 841C2288 905 2180 906 2070 908C1800 910 1300 916 900 915.500C680 914 560 892 420 882.500C300 876 250 930 240 990"/>
<path d="M449 1453C540 1459 594 1459 615 1400C626 1355 643 1318 711 1313"/>
<path d="M1086.500 1702.500C1180 1712 1238 1708 1258 1650C1268 1612 1284 1568 1356 1563"/>
</g>
<g class="dot"><circle cx="709" cy="502.500" r="6.400"/><circle cx="1355" cy="584.500" r="6.400"/><circle cx="2080" cy="427" r="6.400"/><circle cx="240" cy="990" r="6.400"/><circle cx="711" cy="1313" r="6.400"/><circle cx="1356" cy="1563" r="6.400"/></g>
<path class="tri" d="M42 458.700l8.200-14.200 8.200 14.200zM42 498.700l8.200-14.200 8.200 14.200zM699 120l8.200-14.200 8.200 14.200zM699 339.500l8.200-14.200 8.200 14.200zM699 422.700l8.200-14.200 8.200 14.200zM1371 248l8.200-14.200 8.200 14.200zM42 1178.500l8.200-14.200 8.200 14.200zM717 1109l8.200-14.200 8.200 14.200zM717 1334l8.200-14.200 8.200 14.200zM1359 1109l8.200-14.200 8.200 14.200zM1360 1309l8.200-14.200 8.200 14.200zM469 419l8.200-14.200 8.200 14.200zM1125.400 328l8.200-14.200 8.200 14.200zM1768 152l8.200-14.200 8.200 14.200zM469 1156l8.200-14.200 8.200 14.200zM1108 1071l8.200-14.200 8.200 14.200zM1108 1254l8.200-14.200 8.200 14.200zM1766 1069.300l8.200-14.200 8.200 14.200zM1766 1312.700l8.200-14.200 8.200 14.200z"/>
<g class="num"><text x="10.500" y="610.500">1.</text><text x="919.500" y="717">1.</text><text x="1759.500" y="330">1.</text><text x="2030.500" y="491.500">1.</text><text x="17.500" y="1444.500">1.</text><text x="821" y="1707">1.</text></g>
</svg>

<div class="memo" id="m1"><div class="in"><span class="fit" data-w="105">confusing</span><span class="fit" data-w="138.500">section name</span><span class="fit" data-w="149">and hierarchy</span></div></div>
<div class="memo" id="m2"><div class="in"><span class="fit" data-w="166.500">position of info,</span><span class="fit" data-w="126">color &amp; icon</span><span class="fit" data-w="111.500">lack order,</span><span class="fit" data-w="68">create</span><span class="fit" data-w="103">confusion</span></div></div>
<div class="memo" id="m3"><div class="in"><span class="fit" data-w="129.500">no option to</span><span class="fit" data-w="141.500">pre-purchase</span><span class="fit" data-w="117">a ticket for</span><span class="fit" data-w="92.500">later use</span></div></div>
<div class="memo" id="m5"><div class="in"><span class="fit" data-w="75">system</span><span class="fit" data-w="68.500">failure</span><span class="fit" data-w="107.500">generates</span><span class="fit" data-w="113.500">frustration</span></div></div>
<div class="memo" id="m6"><div class="in"><span class="fit" data-w="110">redirected</span><span class="fit" data-w="158">back to similar</span><span class="fit" data-w="100.500">screen as</span><span class="fit" data-w="115.500">homepage</span></div></div>
<div class="memo" id="m6b"><div class="in"><span class="fit" data-w="126.500">confusing &amp;</span><span class="fit" data-w="150">unrelated info</span><span class="fit" data-w="128.500">shown post-</span><span class="fit" data-w="150.500">system failure</span></div></div>
<div class="memo" id="m7"><div class="in"><span class="fit" data-w="117">directed to</span><span class="fit" data-w="154">different page</span><span class="fit" data-w="215.500">setting for purchase</span><span class="fit" data-w="174.500">lack consistency</span><span class="fit" data-w="218">generates confusion</span></div></div>
<div class="memo" id="m7b"><div class="in"><span class="fit" data-w="231.500">unhelpful information</span><span class="fit" data-w="194.500">leads to confusion</span></div></div>

<aside class="legend">
<div class="cap"><span class="fit" data-w="83.500">Legend:</span></div>
<div class="r1 d-flex align-items-center"><div class="key d-flex justify-content-center"><svg width="34" height="29"><path class="tri" d="M17 0l17 29H0z"/></svg></div><span class="fit" data-w="204">Points of confusion</span></div>
<div class="r2 d-flex align-items-center"><div class="key d-flex justify-content-center"><svg width="40" height="39"><path d="M0 0h40v39H0z" fill="#c7d8ea"/></svg></div><span class="fit" data-w="195">Confusing content</span></div>
<div class="r3 d-flex align-items-center"><div class="key d-flex justify-content-center"><svg width="44" height="44"><rect class="box" x="2" y="2" width="39.500" height="39.500"/></svg></div><span class="fit" data-w="161">Clicked actions</span></div>
<div class="r4 d-flex align-items-center"><div class="key d-flex justify-content-center"><svg width="42" height="24"><path class="wire" d="M1 0c0 14 6 20 34 20"/><circle class="dot" cx="35" cy="17" r="6.300"/></svg></div><span class="fit" data-w="220">Navigation direction</span></div>
<div class="r5 d-flex align-items-center"><div class="key d-flex justify-content-center"><span class="fit" data-w="64.500" style="font:700 20.500px/28px 'Noto Sans',sans-serif;color:#2e5e9e">1. 2. 3.</span></div><span class="fit" data-w="254">Actions taken on screen</span></div>
</aside>
</main>

<script src="https://cdn.jsdelivr.net/npm/bootstrap@5.3.0/dist/js/bootstrap.bundle.min.js"></script>
<script>
// Insert the repeated app parts
document.querySelectorAll('[data-part]').forEach(function (el) {
  el.replaceWith(document.getElementById(el.dataset.part).content.cloneNode(true));
});
// Track each label out to its set width
document.querySelectorAll('.fit[data-w]').forEach(function (el) {
  var n = el.textContent.length, w = el.getBoundingClientRect().width;
  el.style.letterSpacing = ((parseFloat(el.dataset.w) - w) / n).toFixed(3) + 'px';
});
</script>
</body>
</html>
